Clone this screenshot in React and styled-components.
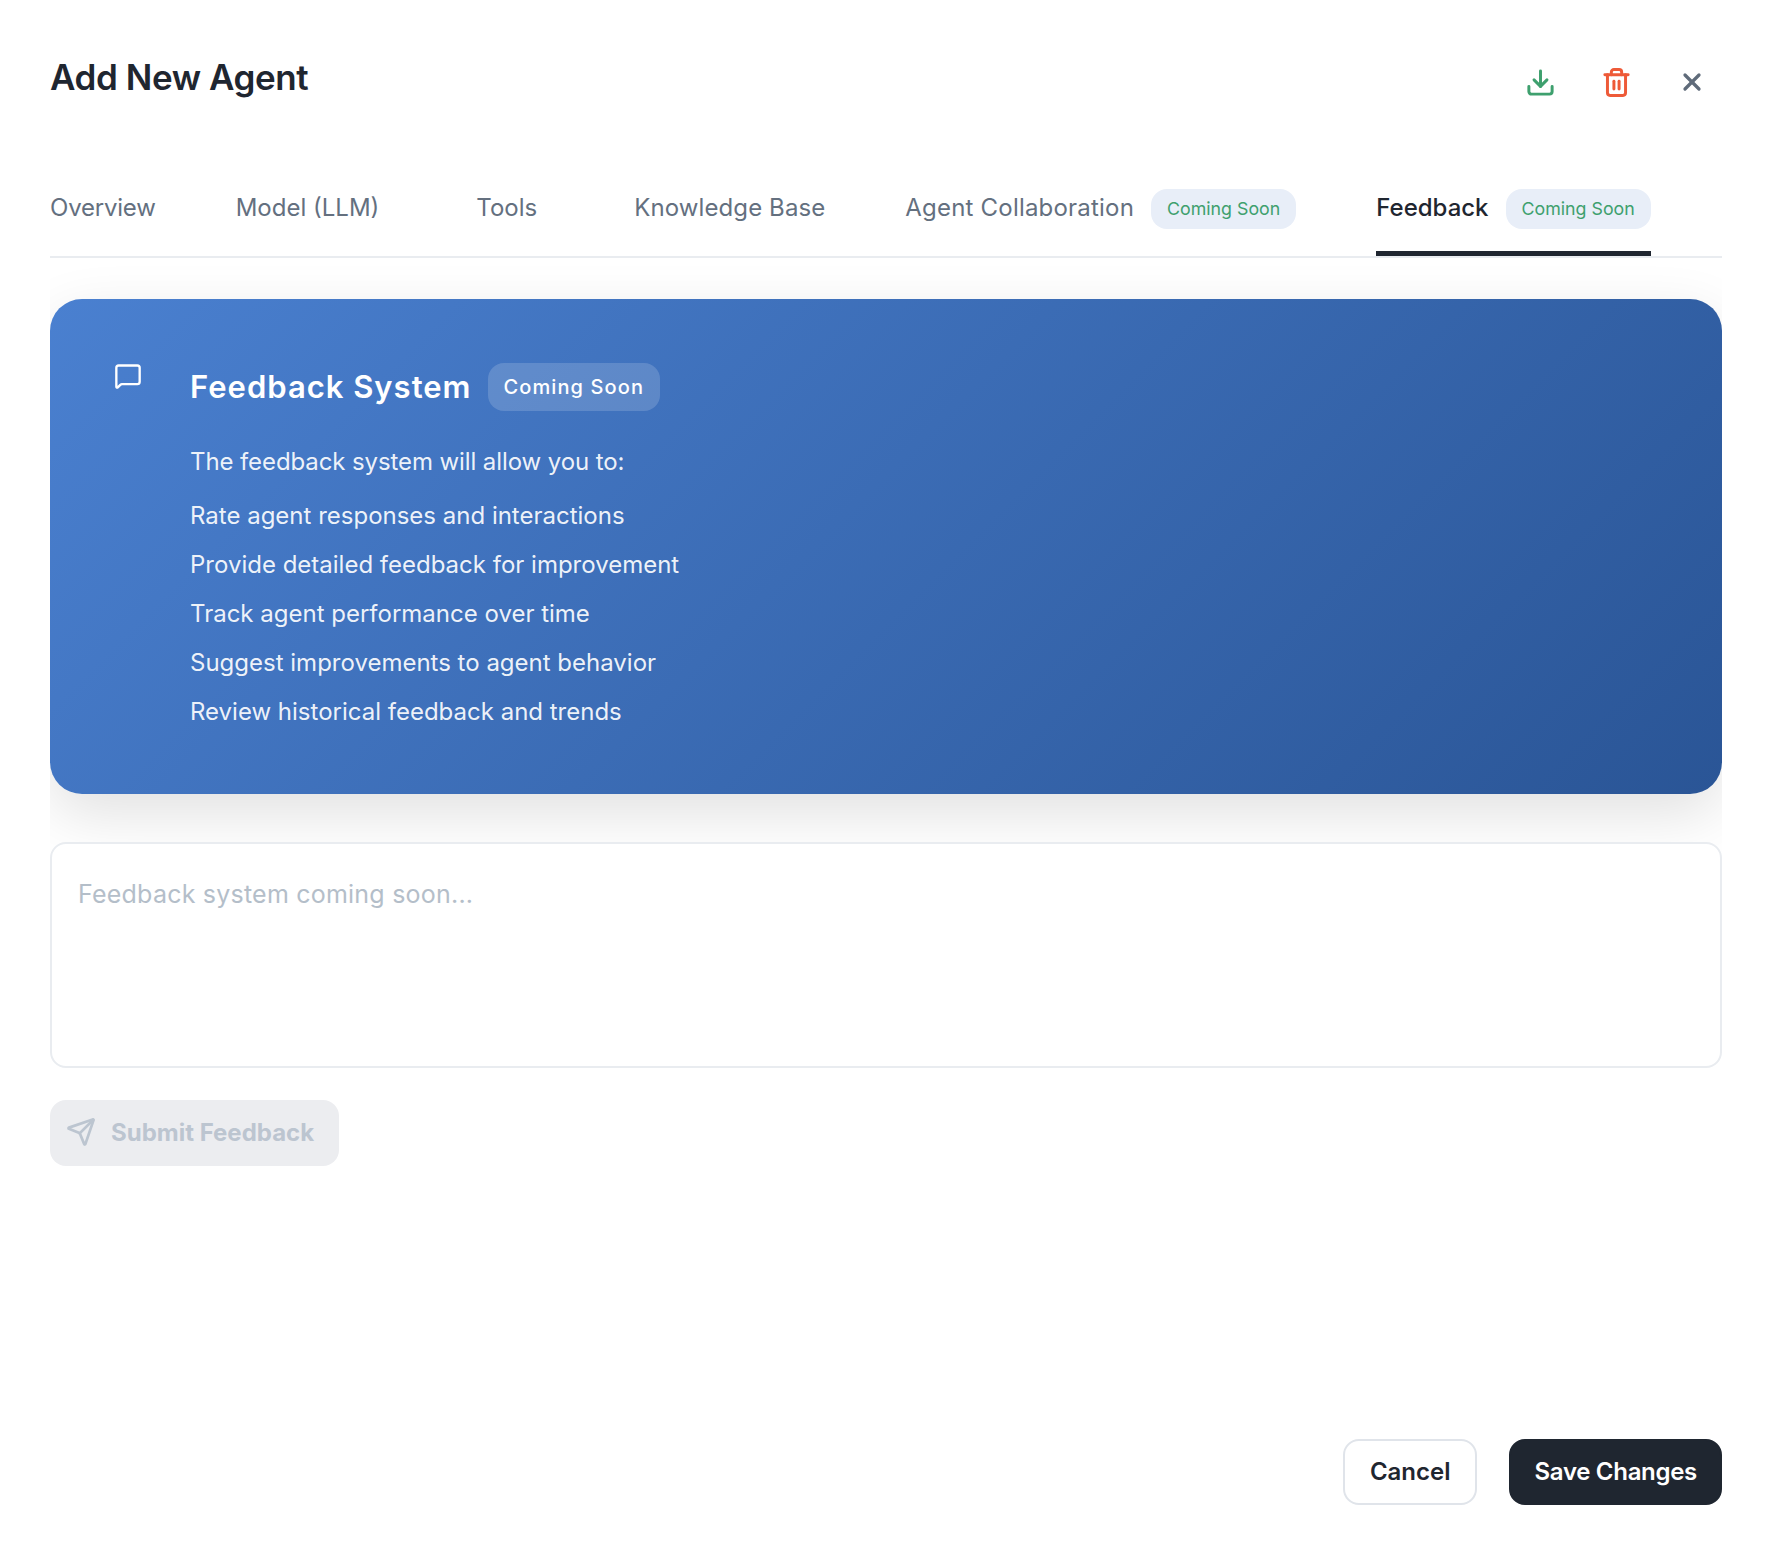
import React from 'react';
import styled, { createGlobalStyle } from 'styled-components';
import { Download, Trash2, X, MessageSquare, Send } from 'lucide-react';

const GlobalStyle = createGlobalStyle`
  html, body {
    margin: 0;
    padding: 0;
    background: #fff;
  }
  * {
    box-sizing: border-box;
  }
`;

const Modal = styled.div`
  width: 1774px;
  height: 1558px;
  padding: 50px 52px 0 50px;
  display: flex;
  flex-direction: column;
  font-family: Inter, "Noto Sans", sans-serif;
  color: #1f2630;
`;

const Header = styled.div`
  display: flex;
  justify-content: space-between;
  align-items: flex-start;
  height: 117px;
`;

const Title = styled.h2`
  margin: 0;
  font-size: 35px;
  line-height: 54px;
  font-weight: 600;
  letter-spacing: -0.42px;
`;

const HeaderActions = styled.div`
  display: flex;
  gap: 44px;
  padding: 16px 14px 0 0;
`;

const IconButton = styled.button`
  width: 32px;
  height: 32px;
  padding: 0;
  border: none;
  background: none;
  display: flex;
  align-items: center;
  justify-content: center;
  color: ${(p) => p.$color};
`;

const TabBar = styled.div`
  display: flex;
  gap: 80px;
  height: 91px;
  border-bottom: 2px solid #e9ecf0;
`;

const Tab = styled.div`
  height: 89px;
  display: flex;
  align-items: flex-start;
  gap: 17px;
  padding-top: 21px;
  margin: 0 ${(p) => (p.$inset ? '17px' : '0')};
  font-size: 24px;
  line-height: 40px;
  font-weight: ${(p) => (p.$active ? 500 : 400)};
  letter-spacing: ${(p) => p.$spacing || 0}px;
  color: ${(p) => (p.$active ? '#1f2630' : '#64707f')};
  border-bottom: 5px solid ${(p) => (p.$active ? '#1f2630' : 'transparent')};
`;

const TabBadge = styled.span`
  height: 40px;
  margin-top: 1px;
  padding: 0 16px;
  display: flex;
  align-items: center;
  border-radius: 16px;
  background: #e8eef8;
  color: #3ea06e;
  font-size: 17.8px;
  font-weight: 400;
  letter-spacing: 0;
`;

const Content = styled.div`
  flex: 1;
  display: flex;
  flex-direction: column;
  overflow: hidden;
  padding-top: 41px;
`;

const Banner = styled.section`
  height: 495px;
  flex-shrink: 0;
  border-radius: 32px;
  padding: 64px;
  display: flex;
  gap: 48px;
  color: #fff;
  background: linear-gradient(135deg, #4a80d0 0%, #2a5596 100%);
  box-shadow: 0 20px 60px rgba(0, 0, 0, 0.12);
`;

const BannerIcon = styled(MessageSquare)`
  flex-shrink: 0;
  margin-top: -1px;
`;

const BannerBody = styled.div`
  display: flex;
  flex-direction: column;
`;

const BannerHead = styled.div`
  display: flex;
  align-items: center;
  gap: 16px;
  height: 48px;
`;

const BannerTitle = styled.h3`
  margin: 0 0 1px;
  font-size: 31px;
  font-weight: 600;
  letter-spacing: 1px;
`;

const BannerBadge = styled.span`
  height: 48px;
  padding: 0 16px 1px;
  display: flex;
  align-items: center;
  border-radius: 16px;
  background: rgba(255, 255, 255, 0.16);
  font-size: 20px;
  font-weight: 500;
  letter-spacing: 1.1px;
`;

const Intro = styled.p`
  margin: 32px 0 0;
  font-size: 24px;
  line-height: 38px;
  letter-spacing: -0.1px;
  color: rgba(255, 255, 255, 0.92);
`;

const FeatureList = styled.ul`
  margin: 16px 0 0;
  padding: 0;
  list-style: none;
  display: flex;
  flex-direction: column;
  gap: 11px;
`;

const Feature = styled.li`
  font-size: 24px;
  line-height: 38px;
  color: rgba(255, 255, 255, 0.92);
`;

const FeedbackInput = styled.textarea`
  margin-top: 48px;
  height: 226px;
  flex-shrink: 0;
  padding: 32px 26px;
  border: 2px solid #e9ecf0;
  border-radius: 16px;
  background: #fff;
  resize: none;
  outline: none;
  font-family: inherit;
  font-size: 25px;
  line-height: 36px;
  letter-spacing: 0.22px;

  &::placeholder {
    color: #b4bec9;
    opacity: 1;
  }
`;

const SubmitButton = styled.button`
  margin-top: 32px;
  width: 289px;
  height: 66px;
  padding: 0 16px 2px;
  display: flex;
  align-items: center;
  gap: 15px;
  border: none;
  border-radius: 16px;
  background: #ecedf0;
  color: #bcc5d0;
  font-family: inherit;
  font-size: 24px;
  font-weight: 700;
`;

const Footer = styled.div`
  display: flex;
  justify-content: flex-end;
  gap: 32px;
  padding-bottom: 53px;
`;

const FooterButton = styled.button`
  height: 66px;
  padding: 0 ${(p) => (p.$primary ? '23px' : '25px')} 2px;
  border-radius: 16px;
  border: 2px solid ${(p) => (p.$primary ? '#1f2630' : '#e0e4ea')};
  background: ${(p) => (p.$primary ? '#1f2630' : '#fff')};
  color: ${(p) => (p.$primary ? '#fff' : '#1f2630')};
  font-family: inherit;
  font-size: 24px;
  font-weight: 600;
  letter-spacing: ${(p) => (p.$primary ? '-0.3px' : '0')};
`;

const tabs = [
  { label: 'Overview', spacing: -0.2 },
  { label: 'Model (LLM)' },
  { label: 'Tools', inset: true },
  { label: 'Knowledge Base', spacing: 0.1 },
  { label: 'Agent Collaboration', badge: true, spacing: 0.2 },
  { label: 'Feedback', badge: true, active: true },
];

const features = [
  'Rate agent responses and interactions',
  'Provide detailed feedback for improvement',
  'Track agent performance over time',
  'Suggest improvements to agent behavior',
  'Review historical feedback and trends',
];

export default function App() {
  return (
    <Modal>
      <GlobalStyle />
      <Header>
        <Title>Add New Agent</Title>
        <HeaderActions>
          <IconButton $color="#3ea06e"><Download size={31} strokeWidth={2.3} /></IconButton>
          <IconButton $color="#ee5a38"><Trash2 size={31} strokeWidth={2.3} /></IconButton>
          <IconButton $color="#5f6b7a"><X size={28} strokeWidth={2.8} /></IconButton>
        </HeaderActions>
      </Header>
      <TabBar>
        {tabs.map((t) => (
          <Tab key={t.label} $active={t.active} $inset={t.inset} $spacing={t.spacing}>
            {t.label}
            {t.badge && <TabBadge>Coming Soon</TabBadge>}
          </Tab>
        ))}
      </TabBar>
      <Content>
        <Banner>
          <BannerIcon size={28} strokeWidth={2} />
          <BannerBody>
            <BannerHead>
              <BannerTitle>Feedback System</BannerTitle>
              <BannerBadge>Coming Soon</BannerBadge>
            </BannerHead>
            <Intro>The feedback system will allow you to:</Intro>
            <FeatureList>
              {features.map((f) => <Feature key={f}>{f}</Feature>)}
            </FeatureList>
          </BannerBody>
        </Banner>
        <FeedbackInput placeholder="Feedback system coming soon..." disabled />
        <SubmitButton disabled>
          <Send size={30} strokeWidth={2.2} />
          Submit Feedback
        </SubmitButton>
      </Content>
      <Footer>
        <FooterButton>Cancel</FooterButton>
        <FooterButton $primary>Save Changes</FooterButton>
      </Footer>
    </Modal>
  );
}
